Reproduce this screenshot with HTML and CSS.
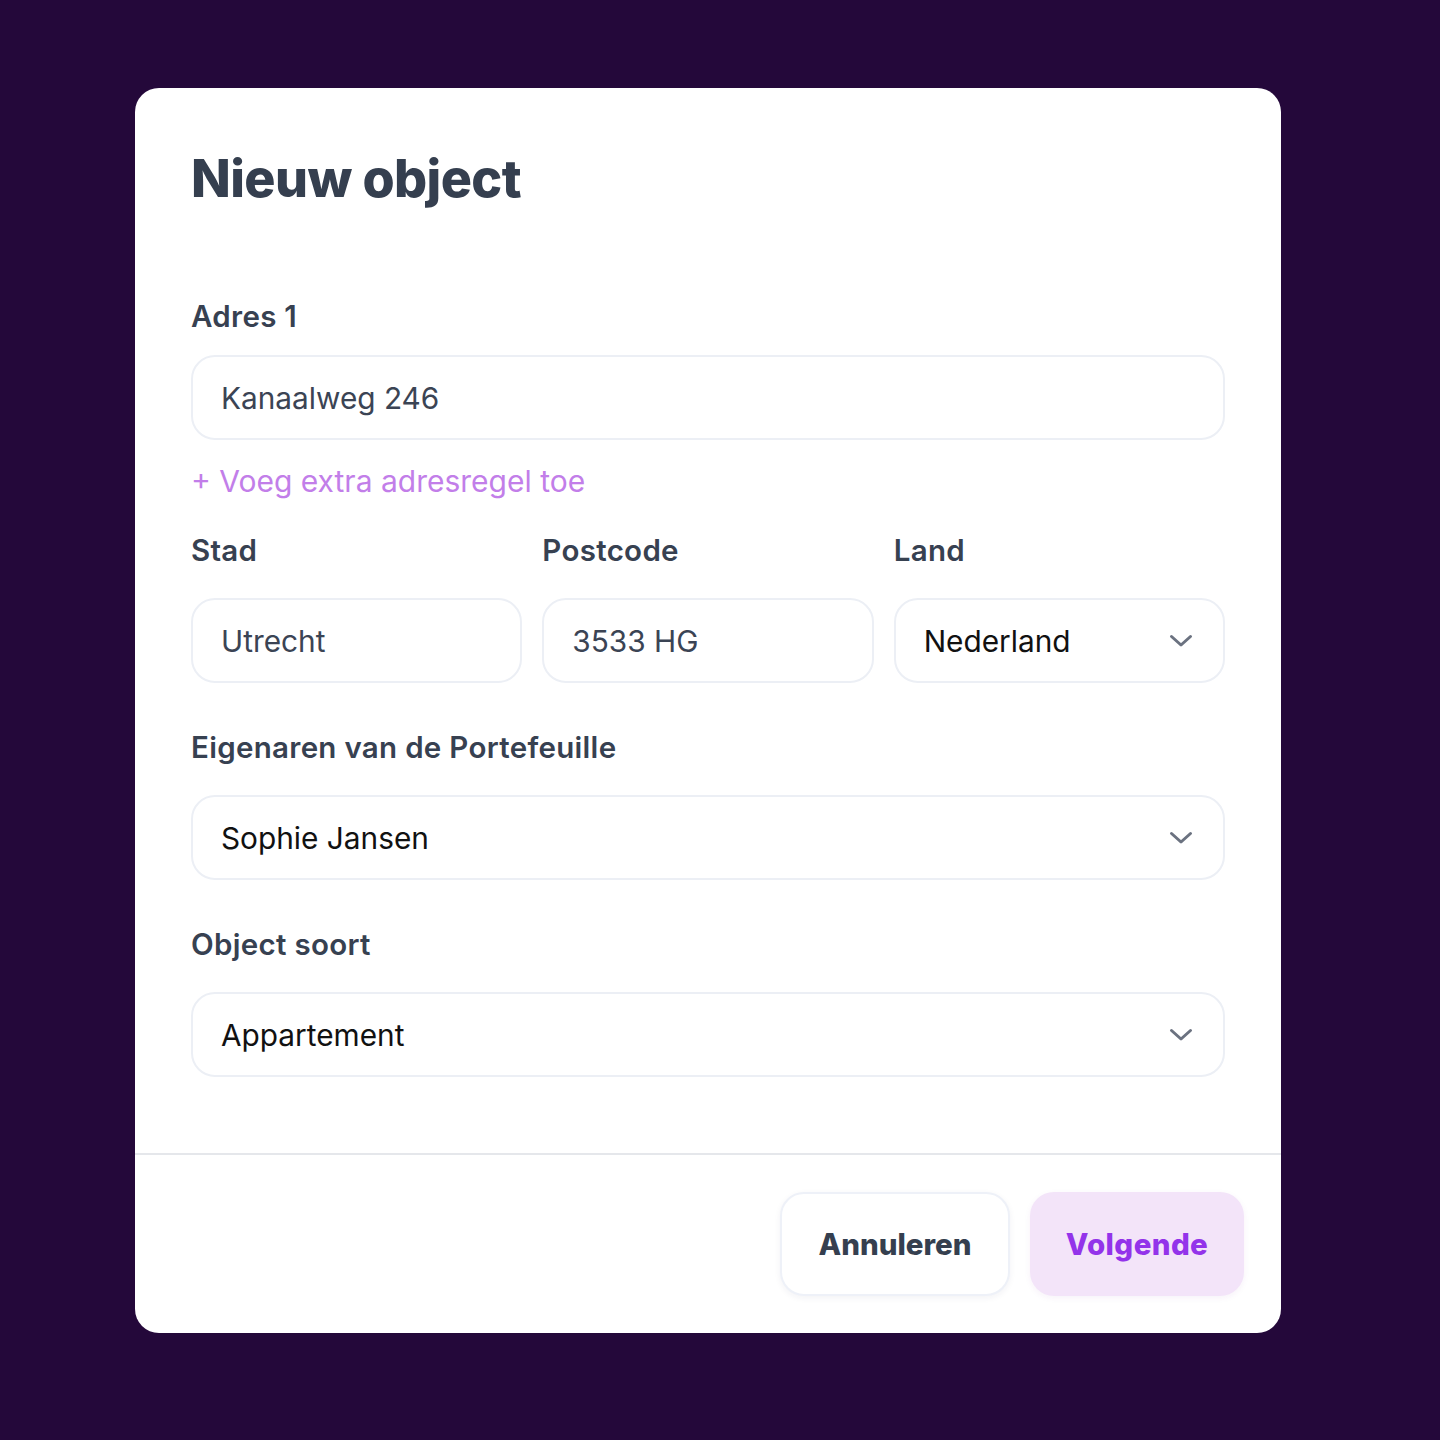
FILE: index.html
```html
<!DOCTYPE html>
<html lang="nl">
<head>
<meta charset="utf-8">
<title>Nieuw object</title>
<link rel="stylesheet" href="styles.css">
</head>
<body>
<div class="modal">
  <div class="modal-body">
    <h1 class="title">Nieuw object</h1>

    <label class="label label-first">Adres 1</label>
    <div class="field field-first"><span class="value">Kanaalweg 246</span></div>

    <div class="add-link">+ Voeg extra adresregel toe</div>

    <div class="row">
      <div class="col">
        <label class="label">Stad</label>
        <div class="field"><span class="value">Utrecht</span></div>
      </div>
      <div class="col">
        <label class="label">Postcode</label>
        <div class="field"><span class="value">3533 HG</span></div>
      </div>
      <div class="col">
        <label class="label">Land</label>
        <div class="field select"><span class="value dark">Nederland</span>
          <svg class="chev" viewBox="0 0 24 14" width="24" height="14"><path d="M2.5 2.5 L12 11 L21.5 2.5" fill="none" stroke="#6b7280" stroke-width="3" stroke-linecap="round" stroke-linejoin="round"/></svg>
        </div>
      </div>
    </div>

    <label class="label label-gap">Eigenaren van de Portefeuille</label>
    <div class="field select"><span class="value dark">Sophie Jansen</span>
      <svg class="chev" viewBox="0 0 24 14" width="24" height="14"><path d="M2.5 2.5 L12 11 L21.5 2.5" fill="none" stroke="#6b7280" stroke-width="3" stroke-linecap="round" stroke-linejoin="round"/></svg>
    </div>

    <label class="label label-gap">Object soort</label>
    <div class="field select"><span class="value dark">Appartement</span>
      <svg class="chev" viewBox="0 0 24 14" width="24" height="14"><path d="M2.5 2.5 L12 11 L21.5 2.5" fill="none" stroke="#6b7280" stroke-width="3" stroke-linecap="round" stroke-linejoin="round"/></svg>
    </div>
  </div>

  <div class="modal-footer">
    <button class="btn btn-cancel">Annuleren</button>
    <button class="btn btn-next">Volgende</button>
  </div>
</div>
</body>
</html>
```

FILE: styles.css
```css
* { box-sizing: border-box; }

html, body {
  margin: 0;
  padding: 0;
}

body {
  background: #24083a;
  width: 1440px;
  height: 1440px;
  padding: 88px 0 0 135px;
  font-family: "Inter", "Lato", "Liberation Sans", sans-serif;
}

.modal {
  width: 1146px;
  height: 1245px;
  background: #ffffff;
  border-radius: 24px;
  display: flex;
  flex-direction: column;
  overflow: hidden;
}

.modal-body {
  padding: 59px 56px 0 56px;
  display: flex;
  flex-direction: column;
  flex: 1;
}

.title {
  margin: 0;
  font-size: 52px;
  line-height: 64px;
  font-weight: 800;
  color: #353f4f;
  letter-spacing: -0.6px;
}

.label {
  display: block;
  font-size: 29.5px;
  line-height: 40px;
  font-weight: 600;
  color: #374151;
  letter-spacing: 0.3px;
  margin-bottom: 28px;
}

.label-first {
  margin-top: 85px;
  margin-bottom: 19px;
}

.label-gap {
  margin-top: 44px;
}

.field {
  height: 85px;
  border: 2px solid #eceff5;
  border-radius: 24px;
  display: flex;
  align-items: center;
  justify-content: space-between;
  padding: 0 30px 0 28px;
  background: #fff;
}

.value {
  font-size: 29.8px;
  color: #3b4454;
}

.value.dark {
  color: #111111;
}

.chev {
  display: block;
}

.add-link {
  margin-top: 21px;
  font-size: 30px;
  line-height: 40px;
  color: #c27ee9;
}

.row {
  margin-top: 29px;
  display: grid;
  grid-template-columns: 1fr 1fr 1fr;
  gap: 20px;
}

.row .label {
  margin-bottom: 28px;
}

.modal-footer {
  height: 180px;
  border-top: 2px solid #e5e7eb;
  display: flex;
  justify-content: flex-end;
  align-items: center;
  gap: 20px;
  padding: 0 37px 0 0;
}

.btn {
  height: 104px;
  border-radius: 24px;
  font-family: inherit;
  font-size: 29.5px;
  font-weight: 800;
  border: none;
  cursor: pointer;
}

.btn-cancel {
  width: 230px;
  background: #fff;
  color: #353f4f;
  border: 2px solid #eef1f8;
  box-shadow: 0 2px 6px rgba(30, 40, 80, 0.06);
}

.btn-next {
  width: 214px;
  background: #f3e4f9;
  color: #9333ea;
  letter-spacing: 0.4px;
  box-shadow: 0 2px 6px rgba(120, 40, 160, 0.06);
}
```
